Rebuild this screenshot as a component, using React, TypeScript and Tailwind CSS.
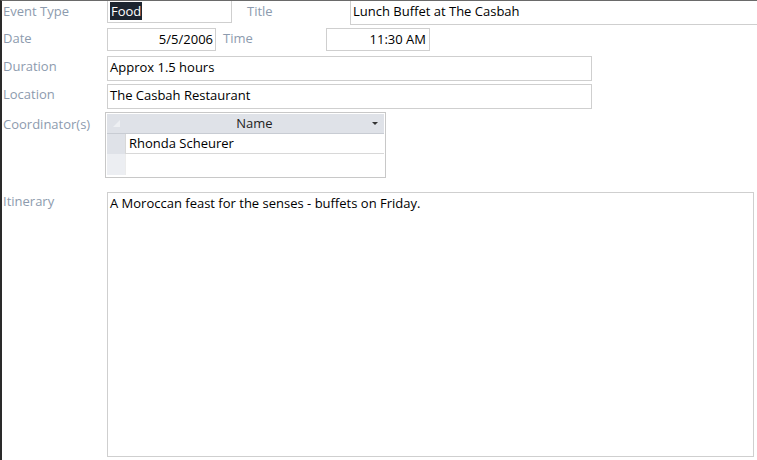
import React from "react";

const font = { fontFamily: '"Open Sans", "Noto Sans", sans-serif' };

function Label({ children, className = "" }: { children: React.ReactNode; className?: string }) {
  return <div className={`text-[13px] leading-[18px] text-[#8d9bae] ${className}`}>{children}</div>;
}

export default function App() {
  return (
    <div className="w-[757px] h-[460px] bg-white overflow-hidden border-l-2 border-t border-l-[#2a2a2a] border-t-[#6a6a6a] text-black" style={font}>
      {/* Row 1 */}
      <div className="flex items-start h-[27px]">
        <Label className="w-[105px] pl-px pt-px">Event Type</Label>
        <div className="w-[125px] h-[22px] border border-t-0 border-[#cfcfcf] pl-[2px] pt-px">
          <span className="bg-[#1c2530] text-white text-[13px] leading-[18px] px-px block w-fit">Food</span>
        </div>
        <Label className="w-[118px] pl-[15px] pt-px">Title</Label>
        <div className="flex-1 h-[24px] border border-t-0 border-r-0 border-[#cfcfcf] pl-[2px] text-[13px] leading-[20px]">
          Lunch Buffet at The Casbah
        </div>
      </div>
      {/* Row 2 */}
      <div className="flex items-start h-[28px]">
        <Label className="w-[105px] pl-px pt-[1px]">Date</Label>
        <div className="w-[109px] h-[23px] border border-[#cfcfcf] text-right pr-[2px] text-[13px] leading-[20px]">5/5/2006</div>
        <Label className="w-[110px] pl-[7px] pt-[1px]">Time</Label>
        <div className="w-[104px] h-[23px] border border-[#cfcfcf] text-right pr-[3px] text-[13px] leading-[20px]">11:30 AM</div>
      </div>
      {/* Row 3 */}
      <div className="flex items-start h-[28px]">
        <Label className="w-[105px] pl-px pt-[1px]">Duration</Label>
        <div className="w-[485px] h-[25px] border border-[#cfcfcf] pl-[2px] text-[13px] leading-[21px]">Approx 1.5 hours</div>
      </div>
      {/* Row 4 */}
      <div className="flex items-start h-[28px]">
        <Label className="w-[105px] pl-px pt-[1px]">Location</Label>
        <div className="w-[485px] h-[25px] border border-[#cfcfcf] pl-[2px] text-[13px] leading-[21px]">The Casbah Restaurant</div>
      </div>
      {/* Coordinators */}
      <div className="flex items-start h-[80px]">
        <Label className="w-[103px] pl-px pt-[3px]">Coordinator(s)</Label>
        <div className="w-[281px] h-[66px] border border-[#c8c8c8] p-px bg-white">
          <div className="flex h-[20px] bg-[#dfe2e8] border-b border-[#c8ccd3]">
            <div className="w-[18px] relative">
              <svg width="8" height="8" viewBox="0 0 8 8" className="absolute left-[6px] top-[6px]">
                <path d="M7 0 L7 7 L0 7 Z" fill="#eef0f3" />
              </svg>
            </div>
            <div className="flex-1 flex items-center justify-center text-[13px] text-[#222] relative">
              Name
              <svg width="6" height="4" viewBox="0 0 6 4" className="absolute right-[6px] top-[8px]">
                <path d="M0 0 L6 0 L3 3 Z" fill="#333" />
              </svg>
            </div>
          </div>
          <div className="flex h-[20px]">
            <div className="w-[18px] bg-[#dfe2e8]" />
            <div className="flex-1 border-b border-l border-[#d8d8d8] pl-[3px] text-[13px] leading-[19px]">Rhonda Scheurer</div>
          </div>
          <div className="flex h-[21px]">
            <div className="w-[18px] bg-[#eceef2]" />
            <div className="flex-1 border-l border-[#ececec]" />
          </div>
        </div>
      </div>
      {/* Itinerary */}
      <div className="flex items-start">
        <Label className="w-[105px] pl-px">Itinerary</Label>
        <div className="w-[647px] h-[265px] border border-[#cfcfcf] pl-[2px] pt-[1px] text-[13px] leading-[18px]">
          A Moroccan feast for the senses - buffets on Friday.
        </div>
      </div>
    </div>
  );
}
